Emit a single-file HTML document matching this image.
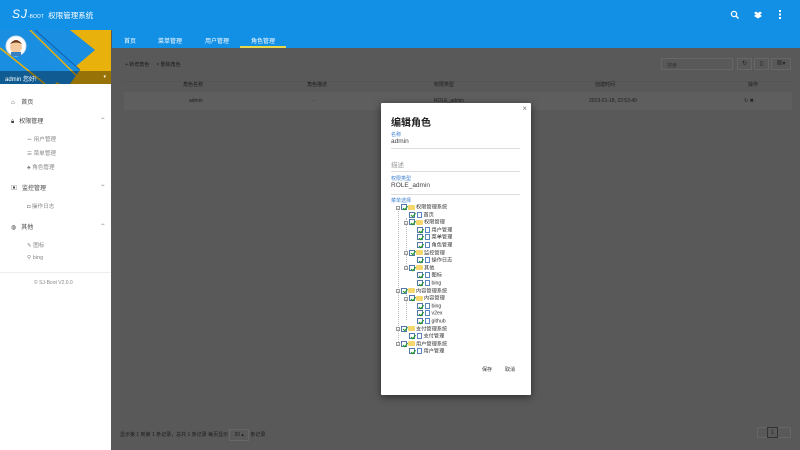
<!DOCTYPE html>
<html><head><meta charset="utf-8"><style>
*{margin:0;padding:0;box-sizing:border-box}
body{width:800px;height:450px;overflow:hidden;position:relative;font-family:"Liberation Sans","Noto Sans CJK SC",sans-serif;background:#595959;color:#333}
.hdr{position:absolute;left:0;top:0;width:800px;height:30px;background:#1190e6;color:#fff}
.hdr .logo{position:absolute;left:12px;top:7px;font-size:12px;font-style:italic;letter-spacing:1px}
.hdr .logo small{font-size:5px;font-style:normal;letter-spacing:0}
.hdr .logo b{font-size:7.5px;font-style:normal;font-weight:normal;letter-spacing:0}
.tabs{position:absolute;left:112px;top:30px;width:688px;height:18px;background:#1190e6;color:#fff;font-size:6px}
.tabs span{position:absolute;top:6px}
.tabs .ul{position:absolute;left:128px;top:16px;width:46px;height:2px;background:#e8d94a}
.side{position:absolute;left:0;top:30px;width:111px;height:420px;background:#fff}
.ban{position:absolute;left:0;top:0;width:111px;height:54px;overflow:hidden}
.user{position:absolute;left:0;top:41px;width:111px;height:13px;background:rgba(0,0,0,.35);color:#fff;font-size:6px;padding:3px 5px}
.menu{position:absolute;left:0;font-size:6px;color:#444}
.gray{color:#888;font-size:5.6px}
.content{position:absolute;left:111px;top:48px;width:689px;height:402px;background:#595959;color:#1c1c1c;font-size:5px}
.modal{position:absolute;left:381px;top:103px;width:150px;height:292px;background:#fff;box-shadow:0 2px 8px rgba(0,0,0,.5);border-radius:1px}
.lbl{position:absolute;left:10px;font-size:5px;color:#3a7fcf}
.val{position:absolute;left:10px;font-size:6.5px;color:#444}
.line{position:absolute;left:10px;width:129px;height:1px;background:#ddd}
.tr{position:absolute;font-size:5.2px;color:#333;white-space:nowrap;height:7px;line-height:7px}
.cb{display:inline-block;width:6px;height:6px;border:0.8px solid #5577aa;vertical-align:middle;position:relative;margin-right:1px;background:#fff}
.cb:after{content:"";position:absolute;left:1.5px;top:-0.3px;width:2px;height:3.5px;border:solid #1a9a1a;border-width:0 1.2px 1.2px 0;transform:rotate(40deg)}
.fd{display:inline-block;width:7px;height:5px;background:#f5d76e;border-radius:1px;vertical-align:middle;margin-right:1px}
.fl{display:inline-block;width:5px;height:6px;border:0.8px solid #5a85c0;background:#fff;vertical-align:middle;margin-right:1.5px;margin-left:1px}
.ex{position:absolute;width:4px;height:4px;border:0.6px solid #999;font-size:3px;line-height:3px;text-align:center;color:#333;background:#fff}
.btn{position:absolute;top:10px;width:15px;height:12px;border:1px solid #666;font-size:6px;text-align:center;line-height:10px;color:#222}
</style></head><body>
<div class="hdr"><div class="logo">SJ<small>-BOOT</small> <b>权限管理系统</b></div>
<svg style="position:absolute;left:730px;top:10px" width="10" height="10"><circle cx="4" cy="4" r="2.6" stroke="#fff" stroke-width="1.3" fill="none"/><line x1="6" y1="6" x2="8.5" y2="8.5" stroke="#fff" stroke-width="1.5"/></svg>
<svg style="position:absolute;left:753px;top:10px" width="10" height="10"><path d="M1 3 L3 1.5 L5 3 L7 1.5 L9 3 L7 4.5 L9 6 L5 8.5 L1 6 L3 4.5Z" fill="#fff"/></svg>
<div style="position:absolute;left:779px;top:10px;width:2px;height:9px;background:linear-gradient(#fff 0 2px,transparent 2px 3.5px,#fff 3.5px 5.5px,transparent 5.5px 7px,#fff 7px)"></div>
</div>
<div class="tabs"><span style="left:12px">首页</span><span style="left:46px">菜单管理</span><span style="left:93px">用户管理</span><span style="left:139px">角色管理</span><div class="ul"></div></div>
<div class="side">
<div class="ban"><svg width="111" height="54"><rect width="111" height="54" fill="#1a8ee0"/><polygon points="35,0 111,0 111,54 55,54 95,20 70,0" fill="#e8b10c"/><polygon points="0,0 40,0 80,40 70,54 60,54 0,12" fill="#1a8ee0"/><line x1="30" y1="0" x2="85" y2="54" stroke="#e8b10c" stroke-width="1.5"/><line x1="0" y1="18" x2="45" y2="54" stroke="#e8b10c" stroke-width="1.5"/><line x1="35" y1="0" x2="80" y2="40" stroke="#1060b0" stroke-width="1"/><circle cx="16" cy="16" r="10" fill="#fff" stroke="#cde" stroke-width="1"/><circle cx="16" cy="17" r="6" fill="#f4c9a0"/><path d="M10 14 Q16 6 22 14 Q16 11 10 14Z" fill="#6b3a1a"/><rect x="11" y="22" width="10" height="4" fill="#3a7fc0"/></svg>
<div class="user">admin 您好!<span style="position:absolute;right:5px;top:3px;font-size:5px">▾</span></div></div>
<div class="menu" style="top:67px;left:11px">⌂&nbsp;&nbsp;&nbsp;&nbsp;首页</div>
<div class="menu" style="top:86px;left:11px">🔒︎&nbsp;&nbsp;&nbsp;权限管理</div><div class="menu" style="top:86px;left:101px">−</div>
<div class="menu gray" style="top:105px;left:27px">ꕀ 用户管理</div>
<div class="menu gray" style="top:119px;left:27px">☰ 菜单管理</div>
<div class="menu gray" style="top:133px;left:27px">♣ 角色管理</div>
<div class="menu" style="top:153px;left:11px">▣&nbsp;&nbsp;&nbsp;监控管理</div><div class="menu" style="top:153px;left:101px">−</div>
<div class="menu gray" style="top:172px;left:27px">◘ 操作日志</div>
<div class="menu" style="top:192px;left:11px">◍&nbsp;&nbsp;&nbsp;其他</div><div class="menu" style="top:192px;left:101px">−</div>
<div class="menu gray" style="top:211px;left:27px">✎ 图标</div>
<div class="menu gray" style="top:225px;left:27px">⚲ bing</div>
<div style="position:absolute;top:242px;left:0;width:111px;height:1px;background:#eee"></div>
<div class="menu gray" style="top:250px;left:34px;font-size:5px">© SJ-Boot V2.0.0</div>
</div>
<div class="content">
<div style="position:absolute;left:14px;top:13px">+ 新增角色&nbsp;&nbsp;&nbsp;&nbsp;&nbsp;× 删除角色</div>
<div style="position:absolute;left:550px;top:10px;width:72px;height:12px;border:1px solid #666;border-radius:1px;padding:3px 5px;color:#333">搜索</div>
<div class="btn" style="left:626px">↻</div><div class="btn" style="left:643px">▯</div><div class="btn" style="left:660px;width:20px">▦▾</div>
<div style="position:absolute;left:12px;top:33px;width:670px;height:1px;background:#555"></div>
<div style="position:absolute;left:13px;top:44px;width:668px;height:18px;background:#5e5e5e"></div>
<div style="position:absolute;top:33px;left:72px">角色名称</div><div style="position:absolute;top:33px;left:196px">角色描述</div><div style="position:absolute;top:33px;left:323px">权限类型</div><div style="position:absolute;top:33px;left:484px">创建时间</div><div style="position:absolute;top:33px;left:637px">操作</div>
<div style="position:absolute;top:50px;left:78px">admin</div><div style="position:absolute;top:50px;left:202px">-</div><div style="position:absolute;top:50px;left:323px">ROLE_admin</div><div style="position:absolute;top:50px;left:478px">2019-01-18, 22:53:49</div><div style="position:absolute;top:50px;left:633px">↻ ✖</div>
<div style="position:absolute;left:9px;top:383px">显示第 1 到第 1 条记录，总共 1 条记录 每页显示 <span style="border:1px solid #666;padding:2px 4px">20 ▴</span> 条记录</div>
<div style="position:absolute;left:646px;top:379px;width:34px;height:11px;border:1px solid #666"></div>
<div style="position:absolute;left:656px;top:379px;width:11px;height:11px;border:1px solid #333;text-align:center;line-height:10px">1</div>
</div>
<div class="modal">
<div style="position:absolute;right:4px;top:1px;font-size:8px;color:#777">×</div>
<div style="position:absolute;left:10px;top:11px;font-size:10px;font-weight:bold;color:#222">编辑角色</div>
<div class="lbl" style="top:28px">名称</div><div class="val" style="top:35px">admin</div><div class="line" style="top:45px"></div>
<div class="val" style="top:56px;color:#999">描述</div><div class="line" style="top:68px"></div>
<div class="lbl" style="top:72px">权限类型</div><div class="val" style="top:79px">ROLE_admin</div><div class="line" style="top:91px"></div>
<div class="lbl" style="top:94px">菜单选择</div>
<div style="position:absolute;left:17px;top:108px;width:0;height:135px;border-left:0.6px dotted #bbb"></div>
<div style="position:absolute;left:25px;top:115px;width:0;height:50px;border-left:0.6px dotted #bbb"></div>
<div style="position:absolute;left:25px;top:192px;width:0;height:25px;border-left:0.6px dotted #bbb"></div>
<div id="tree"></div>
<div style="position:absolute;left:101px;top:263px;font-size:5px">保存</div>
<div style="position:absolute;left:124px;top:263px;font-size:5px">取消</div>
</div>
<script>
var rows=[[0,1,"权限管理系统"],[1,0,"首页"],[1,1,"权限管理"],[2,0,"用户管理"],[2,0,"菜单管理"],[2,0,"角色管理"],[1,1,"监控管理"],[2,0,"操作日志"],[1,1,"其他"],[2,0,"图标"],[2,0,"bing"],[0,1,"内容管理系统"],[1,1,"内容管理"],[2,0,"bing"],[2,0,"v2ex"],[2,0,"github"],[0,1,"支付管理系统"],[1,0,"支付管理"],[0,1,"用户管理系统"],[1,0,"用户管理"]];
var h="";rows.forEach(function(r,i){var y=101+i*7.6,x=19+r[0]*8;
if(r[1])h+='<div class="ex" style="left:'+(x-4)+'px;top:'+(y+1.5)+'px">−</div>';
h+='<div class="tr" style="left:'+(x+1)+'px;top:'+y+'px"><span class="cb"></span>'+(r[1]?'<span class="fd"></span>':'<span class="fl"></span>')+r[2]+'</div>';});
document.getElementById("tree").innerHTML=h;
</script>
</body></html>
